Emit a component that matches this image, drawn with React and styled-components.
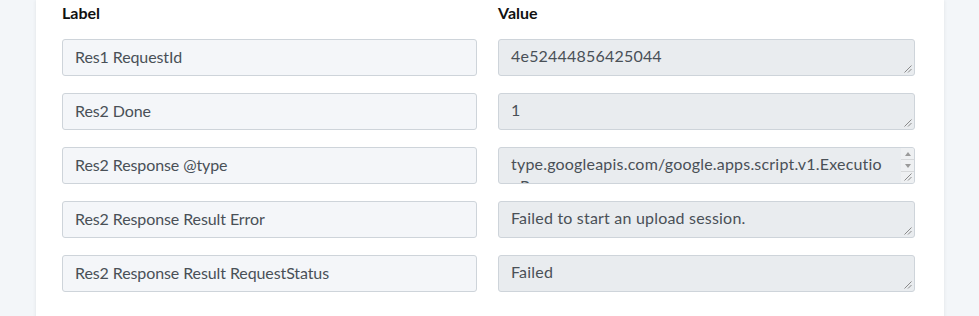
import styled, { createGlobalStyle } from "styled-components";

const GlobalStyle = createGlobalStyle`
    html, body {
        margin: 0;
        padding: 0;
        background-color: #f3f6f9;
        font-family: Lato, "Noto Sans", sans-serif;
    }
`;

const Page = styled.div`
    height: 316px;
    overflow: hidden;
    padding: 0 35px 0 36px;
`;

const Card = styled.div`
    background-color: #ffffff;
    box-shadow: 0 0 4px rgba(0, 0, 0, 0.08);
    padding: 3px 29px 20px 26px;
    min-height: 340px;
`;

const Grid = styled.div`
    display: grid;
    grid-template-columns: 415px 417px;
    column-gap: 21px;
    row-gap: 17px;
`;

const Heading = styled.div`
    font-size: 16px;
    font-weight: 700;
    color: #111111;
    line-height: 19px;
    height: 19px;
`;

const LabelInput = styled.input`
    box-sizing: border-box;
    width: 100%;
    height: 37px;
    padding: 0 12px 3px 12px;
    font-family: Lato, "Noto Sans", sans-serif;
    font-size: 16px;
    letter-spacing: -0.1px;
    color: #495057;
    background-color: #f4f6f9;
    border: 1px solid #ced4da;
    border-radius: 3px;
    outline: none;
`;

const ValueBox = styled.div`
    position: relative;
    box-sizing: border-box;
    height: 37px;
    padding: 5px ${(p) => (p.$scroll ? "26px" : "12px")} 0 12px;
    font-size: 16px;
    letter-spacing: 0.2px;
    line-height: 22px;
    color: #495057;
    background-color: #e9ecef;
    border: 1px solid #ced4da;
    border-radius: 3px;
    overflow: hidden;
    word-break: break-all;
`;

const ScrollBar = styled.div`
    position: absolute;
    top: 0;
    right: 0;
    bottom: 0;
    width: 13px;
    display: flex;
    flex-direction: column;
    background-color: #eef0f2;
`;

const ArrowButton = styled.div`
    height: 11px;
    display: flex;
    align-items: center;
    justify-content: center;
    border-bottom: 1px solid #d6d8da;

    &::before {
        content: "";
        width: 0;
        height: 0;
        border-left: 3.5px solid transparent;
        border-right: 3.5px solid transparent;
        ${(p) => (p.$dir === "up"
            ? "border-bottom: 4px solid #9a9a9a;"
            : "border-top: 4px solid #9a9a9a;")}
    }
`;

const Grip = styled.svg`
    position: absolute;
    right: 2px;
    bottom: 2px;
    width: 8px;
    height: 8px;
`;

function ResizeGrip(){
    return(
        <Grip viewBox="0 0 8 8">
            <line x1="7.5" y1="0.5" x2="0.5" y2="7.5" stroke="#8a8a8a" strokeWidth="1" />
            <line x1="7.5" y1="4" x2="4" y2="7.5" stroke="#8a8a8a" strokeWidth="1" />
        </Grip>
    );
}

function ValueField({ value, scroll }){
    return(
        <ValueBox $scroll={scroll}>
            {value}
            {scroll && (
                <ScrollBar>
                    <ArrowButton $dir="up" />
                    <ArrowButton $dir="down" />
                </ScrollBar>
            )}
            <ResizeGrip />
        </ValueBox>
    );
}

const rows = [
    ["Res1 RequestId", "4e52444856425044"],
    ["Res2 Done", "1"],
    ["Res2 Response @type", "type.googleapis.com/google.apps.script.v1.ExecutionResponse", true],
    ["Res2 Response Result Error", "Failed to start an upload session."],
    ["Res2 Response Result RequestStatus", "Failed"],
];

function App(){
    return(
        <>
            <GlobalStyle />
            <Page>
                <Card>
                    <Grid>
                        <Heading>Label</Heading>
                        <Heading>Value</Heading>
                        {rows.map(([label, value, scroll]) => [
                            <LabelInput key={label} readOnly defaultValue={label} />,
                            <ValueField key={label + "-value"} value={value} scroll={scroll} />,
                        ])}
                    </Grid>
                </Card>
            </Page>
        </>
    );
}
export default App;
